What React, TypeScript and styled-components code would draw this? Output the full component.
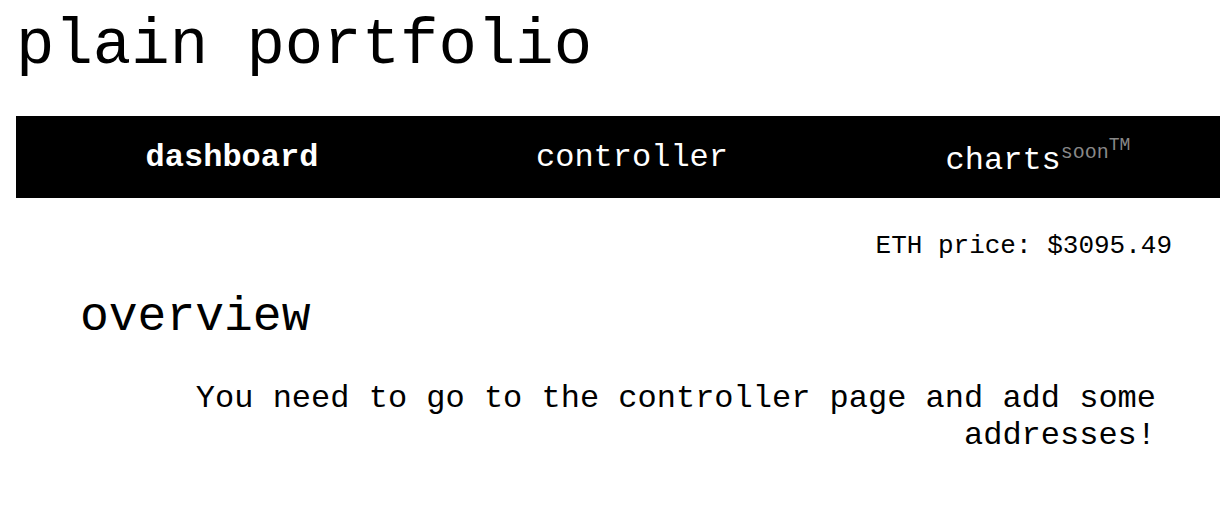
import * as React from 'react';
import styled, { createGlobalStyle } from 'styled-components';

const GlobalStyle = createGlobalStyle`
  html, body {
    margin: 0;
    padding: 0;
    background: #fff;
    color: #000;
    font-family: "Courier New", Courier, "Nimbus Mono PS", "Nimbus Mono L", FreeMono, "Liberation Mono", monospace;
  }
`;

const Page = styled.div`
  padding: 0 0 0 16px;
`;

const Title = styled.h1`
  margin: 0;
  padding: 10px 0 0 0;
  height: 116px;
  box-sizing: border-box;
  font-size: 64px;
  font-weight: normal;
  line-height: 72px;
`;

const Nav = styled.nav`
  display: flex;
  align-items: center;
  height: 82px;
  padding-left: 16px;
  background: #000;
`;

const NavItem = styled.a<{ $active?: boolean; $shift?: number }>`
  flex: 0 0 400px;
  box-sizing: border-box;
  padding-left: ${(p) => p.$shift ?? 0}px;
  text-align: center;
  color: #fff;
  font-size: 32px;
  font-weight: ${(p) => (p.$active ? 'bold' : 'normal')};
  text-decoration: none;
`;

const Soon = styled.sup`
  color: #888;
  font-size: 20px;
`;

const Trademark = styled.sup`
  font-size: 18px;
`;

const Content = styled.main`
  padding: 0 48px 0 0;
`;

const Price = styled.div`
  text-align: right;
  font-size: 26px;
  margin-top: 33px;
`;

const Heading = styled.h2`
  margin: 29px 0 0 64px;
  font-size: 48px;
  font-weight: normal;
`;

const Message = styled.p`
  margin: 36px 16px 0 160px;
  text-align: right;
  font-size: 32px;
`;

export default function App() {
  return (
    <Page>
      <GlobalStyle />
      <Title>plain portfolio</Title>
      <Nav>
        <NavItem $active>dashboard</NavItem>
        <NavItem>controller</NavItem>
        <NavItem $shift={12}>
          charts
          <Soon>
            soon<Trademark>TM</Trademark>
          </Soon>
        </NavItem>
      </Nav>
      <Content>
        <Price>ETH price: $3095.49</Price>
        <Heading>overview</Heading>
        <Message>You need to go to the controller page and add some addresses!</Message>
      </Content>
    </Page>
  );
}
